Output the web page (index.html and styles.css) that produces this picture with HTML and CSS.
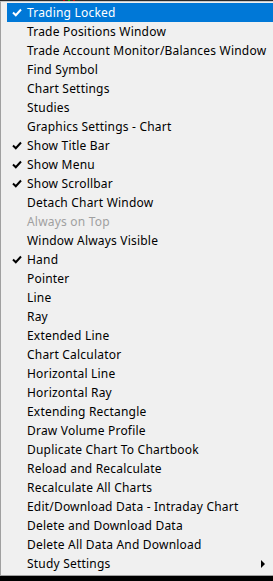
FILE: index.html
```html
<!DOCTYPE html>
<html lang="en">

<head>
    <meta charset="UTF-8">
    <meta name="viewport" content="width=device-width, initial-scale=1.0">
    <title>Chart Menu</title>
    <link rel="stylesheet" href="styles.css">
</head>

<body>
    <div class="topline"></div>
    <ul class="menu">
        <li class="item active checked"><span class="check"><svg width="10" height="9" viewBox="0 0 10 9"><path d="M1 4.5 L3.8 7.2 L9 1.5" /></svg></span>Trading Locked</li>
        <li class="item">Trade Positions Window</li>
        <li class="item">Trade Account Monitor/Balances Window</li>
        <li class="item">Find Symbol</li>
        <li class="item">Chart Settings</li>
        <li class="item">Studies</li>
        <li class="item">Graphics Settings - Chart</li>
        <li class="item checked"><span class="check"><svg width="10" height="9" viewBox="0 0 10 9"><path d="M1 4.5 L3.8 7.2 L9 1.5" /></svg></span>Show Title Bar</li>
        <li class="item checked"><span class="check"><svg width="10" height="9" viewBox="0 0 10 9"><path d="M1 4.5 L3.8 7.2 L9 1.5" /></svg></span>Show Menu</li>
        <li class="item checked"><span class="check"><svg width="10" height="9" viewBox="0 0 10 9"><path d="M1 4.5 L3.8 7.2 L9 1.5" /></svg></span>Show Scrollbar</li>
        <li class="item">Detach Chart Window</li>
        <li class="item disabled">Always on Top</li>
        <li class="item">Window Always Visible</li>
        <li class="item checked"><span class="check"><svg width="10" height="9" viewBox="0 0 10 9"><path d="M1 4.5 L3.8 7.2 L9 1.5" /></svg></span>Hand</li>
        <li class="item">Pointer</li>
        <li class="item">Line</li>
        <li class="item">Ray</li>
        <li class="item">Extended Line</li>
        <li class="item">Chart Calculator</li>
        <li class="item">Horizontal Line</li>
        <li class="item">Horizontal Ray</li>
        <li class="item">Extending Rectangle</li>
        <li class="item">Draw Volume Profile</li>
        <li class="item">Duplicate Chart To Chartbook</li>
        <li class="item">Reload and Recalculate</li>
        <li class="item">Recalculate All Charts</li>
        <li class="item">Edit/Download Data - Intraday Chart</li>
        <li class="item">Delete and Download Data</li>
        <li class="item">Delete All Data And Download</li>
        <li class="item submenu">Study Settings<span class="arrow"></span></li>
    </ul>
</body>

</html>
```

FILE: styles.css
```css
* {
    margin: 0;
    padding: 0;
}

ul {
    list-style: none;
}

body {
    background: #000;
    font-family: "Noto Sans", "Liberation Sans", sans-serif;
    font-size: 12px;
    letter-spacing: 0.2px;
    color: #000;
}

.topline {
    height: 1px;
    background: linear-gradient(to right, #2a2a2a 63px, #c00000 63px, #c00000 65px, #2a2a2a 65px, #2a2a2a 68px, #00b000 68px, #00b000 70px, #2a2a2a 70px, #2a2a2a 73px, #c00000 73px, #c00000 75px, #2a2a2a 75px);
}

.menu {
    background: #f0f0f0;
    border-left: 1px solid #a0a0a0;
    border-top: 1px solid #c8c8c8;
    border-bottom: 1px solid #a0a0a0;
    padding: 1px 0 2px 0;
}

.item {
    position: relative;
    height: 19px;
    line-height: 19px;
    margin-left: 6px;
    padding-left: 20px;
    white-space: nowrap;
}

.item.active {
    background: #0078d7;
    color: #fff;
}

.item.disabled {
    color: #a0a0a0;
}

.check {
    position: absolute;
    left: 5px;
    top: 5px;
    width: 10px;
    height: 9px;
}

.check svg {
    display: block;
}

.check path {
    fill: none;
    stroke: #000;
    stroke-width: 2;
}

.active .check path {
    stroke: #fff;
}

.arrow {
    position: absolute;
    right: 8px;
    top: 6px;
    width: 0;
    height: 0;
    border-top: 4px solid transparent;
    border-bottom: 4px solid transparent;
    border-left: 4px solid #000;
}
```
